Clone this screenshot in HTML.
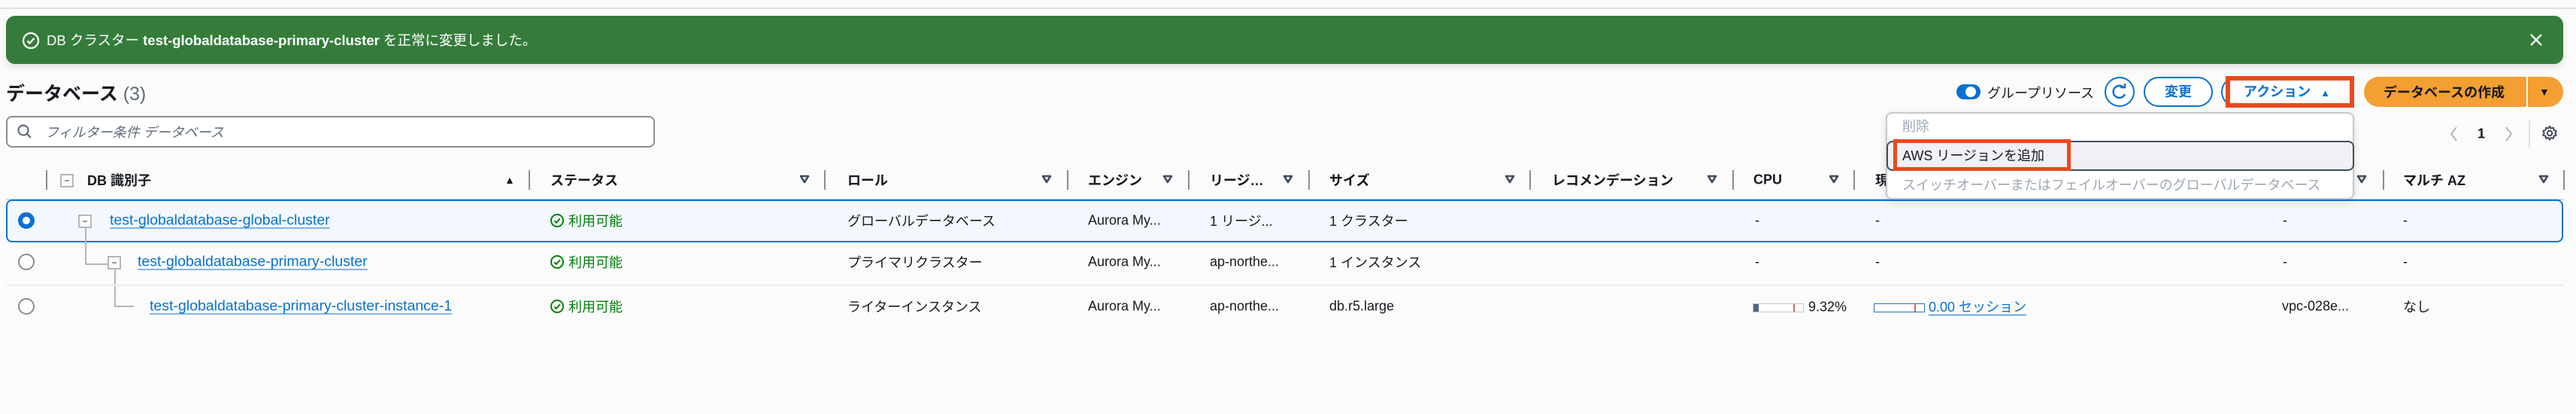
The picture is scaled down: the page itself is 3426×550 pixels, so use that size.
<!DOCTYPE html>
<html><head><meta charset="utf-8"><style>
*{margin:0;padding:0;box-sizing:border-box}
body{width:3426px;height:550px;background:#fbfbfb;font-family:"Liberation Sans","Noto Sans CJK JP",sans-serif;color:#16191f;position:relative;overflow:hidden;font-size:18px}
.a{position:absolute;white-space:nowrap}
.v{transform:translateY(-50%)}
.lnk{color:#0972d3;text-decoration:underline;text-underline-offset:4px;font-size:19.5px}
.hd{font-weight:bold;font-size:18px}
.div{position:absolute;top:226px;width:2px;height:26px;background:#8c8c94}
.tri{position:absolute;top:231px}
.tb{position:absolute;width:18px;height:18px;border:2px solid #b6b6bd;background:#fbfbfb}
.tb:after{content:"";position:absolute;left:4px;top:6px;width:6px;height:2px;background:#9a9aa0}
.rad{position:absolute;width:22px;height:22px;border-radius:50%;border:2px solid #8c8c94;background:#fff}
.st{color:#037f0c}
</style></head><body>
<div class="a" style="left:0;top:10px;width:3426px;height:2px;background:#e0e0e3"></div>
<div class="a" style="left:8px;top:21px;width:3401px;height:64px;background:#357c3b;border-radius:12px;box-shadow:0 4px 10px rgba(0,0,0,.12)"></div>
<svg class="a" style="left:29px;top:42px" width="24" height="24" viewBox="0 0 24 24"><circle cx="12" cy="12" r="10" fill="none" stroke="#fff" stroke-width="2.3"/><path d="M7.5 12.3l3 3 6-6.5" fill="none" stroke="#fff" stroke-width="2.3"/></svg>
<div class="a v" style="left:62px;top:53px;color:#fff;font-size:18.5px">DB クラスター <b>test-globaldatabase-primary-cluster</b> を正常に変更しました。</div>
<svg class="a" style="left:3364px;top:44px" width="18" height="18" viewBox="0 0 18 18"><path d="M2 2L16 16M16 2L2 16" stroke="#fff" stroke-width="2.3"/></svg>

<div class="a v" style="left:8px;top:123px;font-size:25px;font-weight:bold">データベース <span style="font-weight:normal;color:#5f6b7a">(3)</span></div>
<div class="a" style="left:8px;top:154px;width:863px;height:42px;border:2px solid #8c8c94;border-radius:8px;background:#fff"></div>
<svg class="a" style="left:22px;top:164px" width="22" height="22" viewBox="0 0 22 22"><circle cx="9" cy="9" r="6.5" fill="none" stroke="#5f6b7a" stroke-width="2.2"/><path d="M14 14l5 5" stroke="#5f6b7a" stroke-width="2.2"/></svg>
<div class="a v" style="left:60px;top:175px;color:#5f6b7a;font-style:italic;font-size:18px">フィルター条件 データベース</div>

<div class="a" style="left:2602px;top:112px;width:32px;height:20px;border-radius:10px;background:#0972d3"></div>
<div class="a" style="left:2614px;top:115px;width:14px;height:14px;border-radius:50%;background:#fff"></div>
<div class="a v" style="left:2643px;top:123px">グループリソース</div>
<div class="a" style="left:2799px;top:102px;width:40px;height:40px;border:2px solid #0972d3;border-radius:50%;background:#fff"></div>
<svg class="a" style="left:2807px;top:110px" width="24" height="24" viewBox="0 0 24 24"><path d="M18 7A8 8 0 1 0 19 15" fill="none" stroke="#0972d3" stroke-width="2.5"/><path d="M13 6h6V1" fill="none" stroke="#0972d3" stroke-width="2.5"/></svg>
<div class="a" style="left:2851px;top:102px;width:92px;height:40px;border:2px solid #0972d3;border-radius:20px;background:#fff;color:#0972d3;font-weight:bold;text-align:center;line-height:36px">変更</div>
<div class="a" style="left:2954px;top:102px;width:40px;height:40px;border:2px solid #0972d3;border-radius:20px;background:#fff"></div>
<div class="a" style="left:2960px;top:101px;width:171px;height:42px;border:6px solid #ea4a1e;background:#fff;color:#0972d3;font-weight:bold;line-height:30px;padding-left:18px">アクション <span style="font-size:13px;margin-left:8px">▲</span></div>
<div class="a" style="left:3144px;top:102px;width:265px;height:40px;border-radius:20px;background:#f39f32"></div>
<div class="a" style="left:3360px;top:102px;width:2px;height:40px;background:#fff"></div>
<div class="a v" style="left:3170px;top:122px;font-weight:bold">データベースの作成</div>
<div class="a v" style="left:3377px;top:122px;font-size:14px">▼</div>
<svg class="a" style="left:3256px;top:167px" width="14" height="22" viewBox="0 0 14 22"><path d="M11 2L4 11l7 9" fill="none" stroke="#b6b6bd" stroke-width="2"/></svg>
<div class="a v" style="left:3295px;top:178px;font-weight:bold">1</div>
<svg class="a" style="left:3330px;top:167px" width="14" height="22" viewBox="0 0 14 22"><path d="M3 2l7 9-7 9" fill="none" stroke="#b6b6bd" stroke-width="2"/></svg>
<div class="a" style="left:3363px;top:160px;width:2px;height:36px;background:#e0e0e3"></div>
<svg class="a" style="left:3380px;top:166px" width="22" height="22" viewBox="0 0 24 24"><path d="M12 2l2 3 3.5-1 .5 3.5 3.5 1-1.5 3.5 1.5 3-3.5 1-.5 3.5-3.5-1-2 3-2-3-3.5 1-.5-3.5-3.5-1 1.5-3-1.5-3.5 3.5-1 .5-3.5 3.5 1z" fill="none" stroke="#414d5c" stroke-width="2.2" stroke-linejoin="round"/><circle cx="12" cy="12" r="3.5" fill="none" stroke="#414d5c" stroke-width="2.2"/></svg>

<div class="div" style="left:61px"></div>
<div class="tb" style="left:80px;top:231px"></div>
<div class="a v hd" style="left:116px;top:239px">DB 識別子</div>
<div class="a v" style="left:671px;top:239px;font-size:14px">▲</div>
<div class="div" style="left:703px"></div>
<div class="a v hd" style="left:732px;top:239px">ステータス</div>
<div class="div" style="left:1096px"></div>
<div class="a v hd" style="left:1127px;top:239px">ロール</div>
<div class="div" style="left:1419px"></div>
<div class="a v hd" style="left:1447px;top:239px">エンジン</div>
<div class="div" style="left:1580px"></div>
<div class="a v hd" style="left:1609px;top:239px">リージ…</div>
<div class="div" style="left:1740px"></div>
<div class="a v hd" style="left:1768px;top:239px">サイズ</div>
<div class="div" style="left:2034px"></div>
<div class="a v hd" style="left:2064px;top:239px">レコメンデーション</div>
<div class="div" style="left:2304px"></div>
<div class="a v hd" style="left:2332px;top:239px">CPU</div>
<div class="div" style="left:2465px"></div>
<div class="a v hd" style="left:2494px;top:239px">現</div>
<div class="div" style="left:3169px"></div>
<div class="a v hd" style="left:3196px;top:239px">マルチ AZ</div>
<div class="div" style="left:3409px"></div>
<svg width="0" height="0" style="position:absolute"><defs><symbol id="t" viewBox="0 0 14 14"><path d="M2 3h10L7 11z" fill="none" stroke="#414d5c" stroke-width="2.6" stroke-linejoin="round"/></symbol></defs></svg>
<svg class="tri" style="left:1063px" width="14" height="14"><use href="#t"/></svg>
<svg class="tri" style="left:1385px" width="14" height="14"><use href="#t"/></svg>
<svg class="tri" style="left:1546px" width="14" height="14"><use href="#t"/></svg>
<svg class="tri" style="left:1706px" width="14" height="14"><use href="#t"/></svg>
<svg class="tri" style="left:2001px" width="14" height="14"><use href="#t"/></svg>
<svg class="tri" style="left:2270px" width="14" height="14"><use href="#t"/></svg>
<svg class="tri" style="left:2432px" width="14" height="14"><use href="#t"/></svg>
<svg class="tri" style="left:3134px" width="14" height="14"><use href="#t"/></svg>
<svg class="tri" style="left:3376px" width="14" height="14"><use href="#t"/></svg>
<div class="a" style="left:8px;top:264px;width:3401px;height:2px;background:#d1d5db"></div>

<div class="a" style="left:8px;top:265px;width:3401px;height:57px;border:2px solid #0972d3;border-radius:8px;background:#f2f8fd"></div>
<div class="rad" style="left:24px;top:282px;border:6px solid #0972d3"></div>
<div class="a" style="left:113px;top:302px;width:2px;height:50px;background:#b6b6bd"></div>
<div class="a" style="left:113px;top:350px;width:30px;height:2px;background:#b6b6bd"></div>
<div class="a" style="left:152px;top:357px;width:2px;height:51px;background:#b6b6bd"></div>
<div class="a" style="left:152px;top:406px;width:26px;height:2px;background:#b6b6bd"></div>
<div class="tb" style="left:104px;top:285px"></div>
<div class="a v lnk" style="left:146px;top:293px">test-globaldatabase-global-cluster</div>
<div class="a v" style="left:1127px;top:293px">グローバルデータベース</div>
<div class="a v" style="left:1447px;top:293px">Aurora My...</div>
<div class="a v" style="left:1609px;top:293px">1 リージ...</div>
<div class="a v" style="left:1768px;top:293px">1 クラスター</div>
<div class="a v" style="left:2334px;top:293px">-</div>
<div class="a v" style="left:2494px;top:293px">-</div>
<div class="a v" style="left:3036px;top:293px">-</div>
<div class="a v" style="left:3196px;top:293px">-</div>

<div class="rad" style="left:24px;top:337px"></div>
<div class="tb" style="left:143px;top:340px"></div>
<div class="a v lnk" style="left:183px;top:348px">test-globaldatabase-primary-cluster</div>
<div class="a v" style="left:1127px;top:348px">プライマリクラスター</div>
<div class="a v" style="left:1447px;top:348px">Aurora My...</div>
<div class="a v" style="left:1609px;top:348px">ap-northe...</div>
<div class="a v" style="left:1768px;top:348px">1 インスタンス</div>
<div class="a v" style="left:2334px;top:348px">-</div>
<div class="a v" style="left:2494px;top:348px">-</div>
<div class="a v" style="left:3036px;top:348px">-</div>
<div class="a v" style="left:3196px;top:348px">-</div>
<div class="a" style="left:8px;top:378px;width:3401px;height:2px;background:#ebebf0"></div>

<div class="rad" style="left:24px;top:396px"></div>
<div class="a v lnk" style="left:199px;top:407px">test-globaldatabase-primary-cluster-instance-1</div>
<div class="a v" style="left:1127px;top:407px">ライターインスタンス</div>
<div class="a v" style="left:1447px;top:407px">Aurora My...</div>
<div class="a v" style="left:1609px;top:407px">ap-northe...</div>
<div class="a v" style="left:1768px;top:407px">db.r5.large</div>
<div class="a" style="left:2331px;top:403px;width:68px;height:12px;border:1px solid #c6c6cd;background:#fff"></div>
<div class="a" style="left:2332px;top:404px;width:7px;height:10px;background:#4a6585"></div>
<div class="a" style="left:2385px;top:404px;width:2px;height:10px;background:#d46e5a"></div>
<div class="a v" style="left:2405px;top:408px">9.32%</div>
<div class="a" style="left:2492px;top:403px;width:68px;height:12px;border:1px solid #2d6fb5;background:#fff"></div>
<div class="a" style="left:2546px;top:404px;width:2px;height:10px;background:#d46e5a"></div>
<div class="a v lnk" style="left:2565px;top:407px;font-size:18px">0.00 セッション</div>
<div class="a v" style="left:3035px;top:407px">vpc-028e...</div>
<div class="a v" style="left:3196px;top:407px">なし</div>

<svg width="0" height="0" style="position:absolute"><defs><symbol id="c" viewBox="0 0 20 20"><circle cx="10" cy="10" r="8" fill="none" stroke="#037f0c" stroke-width="2"/><path d="M6.3 10.3l2.5 2.6 5-5.5" fill="none" stroke="#037f0c" stroke-width="2"/></symbol></defs></svg>
<svg class="a" style="left:731px;top:283px" width="20" height="20"><use href="#c"/></svg>
<div class="a v st" style="left:756px;top:293px">利用可能</div>
<svg class="a" style="left:731px;top:338px" width="20" height="20"><use href="#c"/></svg>
<div class="a v st" style="left:756px;top:348px">利用可能</div>
<svg class="a" style="left:731px;top:397px" width="20" height="20"><use href="#c"/></svg>
<div class="a v st" style="left:756px;top:407px">利用可能</div>

<div class="a" style="left:2508px;top:149px;width:623px;height:116px;border:2px solid #c6c6cd;border-radius:8px;background:#fff;box-shadow:0 4px 12px rgba(0,0,0,.12)"></div>
<div class="a v" style="left:2530px;top:167px;color:#9ba7b6">削除</div>
<div class="a" style="left:2509px;top:187px;width:622px;height:40px;border:2px solid #414d5c;border-radius:8px;background:#f0f0f5"></div>
<div class="a" style="left:2518px;top:185px;width:236px;height:42px;border:5px solid #ea4a1e"></div>
<div class="a v" style="left:2530px;top:206px">AWS リージョンを追加</div>
<div class="a v" style="left:2530px;top:245px;color:#9ba7b6">スイッチオーバーまたはフェイルオーバーのグローバルデータベース</div>
</body></html>
